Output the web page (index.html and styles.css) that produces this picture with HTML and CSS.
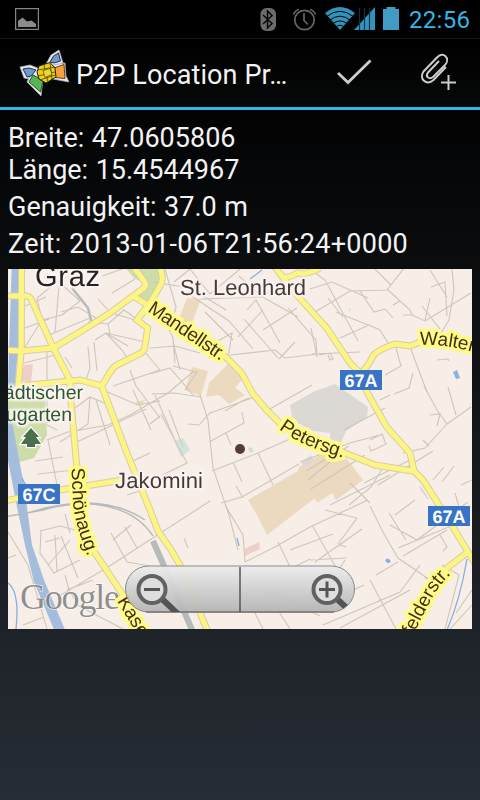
FILE: index.html
```html
<!DOCTYPE html>
<html lang="de">
<head>
<meta charset="utf-8">
<title>P2P Location Provider</title>
<link rel="stylesheet" href="styles.css">
</head>
<body>
<header class="status">
  <svg class="status-photo" width="24" height="22" viewBox="15 8 24 22"><rect x="15.6" y="8.6" width="22.8" height="20.8" fill="#050505" stroke="#858585" stroke-width="1.2"/><path d="M18 27V21l4.500-3.500 4.500 4 4.500-1L36 24v3z" fill="#8c8c8c"/></svg>
  <svg class="status-icons" width="144" height="28" viewBox="258 5 144 28">
    <rect x="260.500" y="8" width="15.500" height="23" rx="6" fill="#6c6c6c"/>
    <path d="M263 15l9 8.500-4.500 4.500V11l4.500 4.500-9 8.500" fill="none" stroke="#090909" stroke-width="1.500"/>
    <g fill="none" stroke="#666" stroke-width="1.700"><circle cx="304.500" cy="20" r="9.700"/><path d="M304 13v7.500l4 4M293.500 14.500q1.500-4 5.500-5M315.500 14.500q-1.500-4-5.500-5"/></g>
    <path d="M325 13Q340 1 355 13L340 30z" fill="#3194bd"/>
    <path d="M326 17Q340 5.500 354 17M329 20.800Q340 11.500 351 20.800M332 24.300Q340 17.500 348 24.300M335 27.500Q340 23 345 27.500" fill="none" stroke="#000" stroke-width="1"/>
    <path d="M354 30L375 7V30z" fill="#3194bd"/>
    <path d="M359.500 8v22M364.500 8v22M369.500 8v22" stroke="#0a3346" stroke-width="1.200"/>
    <path d="M383 9h3.500V7h9v2h3.500v21h-16z" fill="#419cc4"/>
  </svg>
  <time class="clock">22:56</time>
</header>
<nav class="bar">
  <svg class="logo" width="52" height="50" viewBox="18 49 52 50">
    <g stroke-linejoin="round">
      <g fill="#e9ebf2" stroke="#a6aab8" stroke-width=".8">
        <path d="M46 65l5-9 8-5 4 13-9 5-7 2z"/><path d="M20 68l10-2 10 4 1 8-8 3-9-2z"/><path d="M53 66l12-2 1 13 3 6-16-3z"/><path d="M31 75l12 5-2 17-14-14z"/>
      </g>
      <path d="M50 63l3.500-6 5-3 2 8-6.500 2z" fill="#6e9ace" stroke="#252e40"/>
      <path d="M23 70l6-1 7 2-5 6-4 1z" fill="#6e9ace" stroke="#252e40"/>
      <path d="M54 69l10-3.500 1 14-10-1z" fill="#f6a13b" stroke="#654019"/>
      <path d="M33 76l10 6-2.500 11L29 83z" fill="#57b653" stroke="#235925"/>
      <path d="M39 67l11-3.500 5 5.500 1 9-10 6-7-4-2-7z" fill="#ebcf19" stroke="#201d05"/>
      <path d="M38 71l17-3M38 77l17-4M44 66l4 17M50 64l2 16M40 81l15-5" fill="none" stroke="#4d4508" stroke-width=".8"/>
      <path d="M43 71.500l7-2 2 6-7 3z" fill="#f0d52b" stroke="#4d4508" stroke-width=".7"/>
    </g>
  </svg>
  <h1 class="title">P2P Location Pr…</h1>
  <svg class="act" width="145" height="50" viewBox="335 50 145 50" fill="none" stroke="#ccc">
    <path d="M338 75l10 9.500L370.500 62.500" stroke-width="2.800"/>
    <path d="M446 69L433.500 82c-7 6-15-1-10-8.500L437 59.500c6-7 14 1 8 7.500L433 79c-4 3-8-.5-5-4.500L439 63" stroke-width="2"/>
    <path d="M441 84.500h15M448.500 77v15" stroke-width="2"/>
  </svg>
</nav>
<main class="content">
  <p class="line first">Breite: 47.0605806</p>
  <p class="line">Länge: 15.4544967</p>
  <p class="line">Genauigkeit: 37.0 m</p>
  <p class="line time">Zeit: 2013-01-06T21:56:24+0000</p>
  <svg class="map" width="464" height="360" viewBox="8 269 464 360">
    <defs>
      <linearGradient id="zoom" x2="0" y2="1"><stop stop-color="#ededed"/><stop offset=".5" stop-color="#d0d0d0"/><stop offset="1" stop-color="#b4b4b4"/></linearGradient>
      <filter id="white-halo" filterUnits="userSpaceOnUse" x="8" y="269" width="464" height="360" color-interpolation-filters="sRGB"><feMorphology in="SourceAlpha" operator="dilate" radius="2" result="wide"/><feGaussianBlur in="wide" stdDeviation=".8" result="soft"/><feFlood flood-color="#fcf3f3"/><feComposite in2="soft" operator="in" result="halo"/><feMerge><feMergeNode in="halo"/><feMergeNode in="SourceGraphic"/></feMerge></filter>
      <filter id="yellow-halo" filterUnits="userSpaceOnUse" x="8" y="269" width="464" height="360" color-interpolation-filters="sRGB"><feMorphology in="SourceAlpha" operator="dilate" radius="3" result="wide"/><feGaussianBlur in="wide" stdDeviation=".6" result="soft"/><feFlood flood-color="#fffb86"/><feComposite in2="soft" operator="in" result="halo"/><feMerge><feMergeNode in="halo"/><feMergeNode in="halo"/><feMergeNode in="SourceGraphic"/></feMerge></filter>
      <clipPath id="pill"><rect x="126" y="566" width="228" height="46" rx="23"/></clipPath>
      <g id="roads">
        <path d="M21.500 262L21.300 350 18 387"/>
        <path d="M4 296L26 296Q30 296 32 301L53.300 348 70 380 71 402 76.700 465 82 515 95 553 121.700 593 142 632"/>
        <path d="M4 350L21 351 53 348 80 332 110 313 133 296 144 288Q147 285 144 281L133 266"/>
        <path d="M18 386L50 383 80 380 101.700 386 109 374Q113 367 117 365L141 353Q145 350 145 346L147.700 328 137 320 150 303 160 286Q163 281 162 276L160 266"/>
        <path d="M133 296L146 304 190 334 226.700 358 241.700 373 253 394 266.700 410 281.700 425 345 453 375 465 413 471"/>
        <path d="M274 266L295 293 326.700 328 350 363 360 373 367 392 386.700 427 410 453 414 471 423 480 451.700 525 468 552 476 565"/>
        <path d="M284 277Q290 278 297 273 307 275 320 268"/>
        <path d="M360 373Q367 369 373 356 377 350 395 344L410 346 423 341"/>
        <path d="M101.700 386L125 448 150 510 158 531 170 548 180 565 208 632"/>
        <path d="M4 501L60 490 123 480"/>
        <path d="M468 552L447 568 425 595 404 632"/>
      </g>
      <path id="mandell" d="M147 311L222 362"/><path id="peters" d="M279 429Q302 447 348 459"/><path id="walter" d="M420 345Q447 343 490 357"/>
      <path id="schoen" d="M71.500 468L73 503Q75 525 89 560"/><path id="kaserne" d="M117 601L142 642"/><path id="felder" d="M404 654L419 623 430 602Q438 586 451 574"/>
    </defs>
    <rect x="8" y="269" width="464" height="360" fill="#f6eee7"/>
    <path d="M124 266H160L161 280 148 303 136 294 146 284 134 278zM8 397H45L47 435 34 458 16 463 8 420z" fill="#cddca9"/>
    <g fill="#ecdac0"><path d="M187 298l14 1-12 32-12-7zM192 367l16 4-7 25-16-6zM209 383l19-19 15 14-8 10 10 7-16 9-10-9-13 2zM248 500l50-29 1-4 36-21 16 18 12 16-27 20-7-13-62 48-10-20zM136 402l9-2-2 4-7 1zM310 489l22-15 6 15-21 14z"/></g>
    <path d="M290 405l25-14 20-7 33 23-1 10-21 14-5 12-11-4v-6l-16-2-21-10zM301 463l10-8 3 5-8 8zM248 448l3-1 3 4-4 2z" fill="#dcd9d5"/>
    <path d="M24 365l9-1-2 18-10-1zM244 549l15-7 1 7-15 7z" fill="#efcfca"/>
    <path d="M174 441l9-3 7 12-9 7zM348 309l3-1-1 4z" fill="#d4e4dd"/>
    <path d="M11.700 268H19L18 350 15 385 8 397V385L9 350zM4 390L12 422 24 485 32 545 44 580 66 632H55L34 582 25 545 17 507 4 440z" fill="#a4bddd"/>
    <g fill="none" stroke="#86aee0" stroke-width="1.300"><path d="M8 583Q20 592 16 629M250 279l12-9M467 559Q460 600 447 630M237 538l2 8M22 478l4 8"/></g>
    <path d="M453 372l4-2 3 8-4 1zM385 560q3-3 5 0t-3 3z" fill="#8ab1e2"/>
    <g fill="none" stroke="#b6babb"><path d="M72 288L88 308 92 324" stroke-width="2.500"/><path d="M4 517L43 510Q77 500 106 506 138 513 153 536M28 513Q100 490 145 520" stroke-width="1.400"/><path d="M153 541L168 575 193 632" stroke-width="6"/></g>
    <g class="lanes">
      <path d="M25 328L49 319M25 347L42 320 37 298M25 306L46 297M37 298L58 281 80 301 62 315 42 320M59 286L55 332M24 363L48 357 58 354M47 349L47 382M65 357L72 368M61 312L78 307 99 320M49 335L90 318M88 347L90 368 86 380M95 340L106 333 128 346M94 342L97 371M88 322L108 324 124 310 137 319M108 324L110 334M102 276L125 268M112 293L135 279M98 299L108 310M115 314L135 320M106 333L145 342M106 333L122 350 130 362M130 370L136 386 160 418M113 386L160 370M144 351L160 370"/>
      <path d="M71 411L90 397 109 405M90 397L88 424 60 442M80 430L108 425 130 415 168 393 194 371M47 440L68 432 81 430M48 440L57 485M35 461L63 457M38 474L74 470M47 398L47 425 57 430M96 400L110 445M103 390L138 405 160 401M77 442L146 409M133 390L151 430M155 395L174 438M133 461L150 453M127 495L146 489"/>
      <path d="M154 300L173 338 175 363M165 269L176 307 171 326M153 282L190 288 226 310M174 282L190 269 210 294 240 269M288 308L316 340 317 356M201 299L263 297 288 275M190 295L229 321 253 349M205 312L233 340M209 346L232 333 228 358M230 355L275 350 285 358 317 354M238 337L263 310M244 319L278 358M239 276L261 296 298 317M247 310L256 300 280 343M279 359L295 342M263 330L297 308M173 342L180 370M150 348L175 346 200 353M173 366L197 372 185 390M150 374L170 368 194 396M152 394L174 393 201 397"/>
      <path d="M310 269L325 280 358 341M310 289L332 282 368 298M375 269L391 285M310 315L350 291 387 290 405 267M388 290L410 310 412 315M393 305L400 301M328 298L343 317M336 312L368 325M340 338L369 325 380 330 388 343M360 291L374 312 385 309 393 318M403 315L412 315 425 321 471 293M430 298L425 320M422 306L440 329M452 269L454 290 449 320 440 335M431 287L445 282 447 316M430 270L440 286 447 297M410 347L427 392M396 348L401 366 385 375M413 373L409 388 394 394M437 360L448 359 449 361M312 354L360 352M311 328L317 357M319 355L330 353 333 359 330 360 328 355"/>
      <path d="M424 386L437 410 447 424M447 424L471 407M430 415L440 414 437 426M448 387L456 415M344 430L385 408M268 410L312 385M300 462L350 443 380 435M370 440L382 434 386 444 371 451 369 446M380 400L390 395M403 453L425 448 447 424M423 440L429 446M433 480L444 467M461 485L472 480M442 482L454 466M420 487L428 499M455 493L464 524"/>
      <path d="M150 424L160 416M161 414L187 463 150 481M169 410L183 447M199 425L188 424M199 425L210 413 252 398M242 412L244 423 211 441 209 442M226 433L231 445M200 395L208 420 213 468 229 515 238 550M212 471L258 453 290 439M233 462L242 482M258 453L273 485M236 486L243 498M221 503L242 497 299 464M225 411L242 401 249 398"/>
      <path d="M8 532L28 565 47 629M16 555L8 558M40 531L60 526 75 530M41 530L40 553 54 573 80 560M45 542L60 538M61 536L78 578M65 514L70 533M70 540L48 565M55 535L57 571M61 595L108 567 210 501M111 533L127 562 150 566M113 540L131 525M125 527L137 548M188 548L184 538M65 575L69 590 79 606 100 617 123 629M67 590L93 580M23 625L44 617M225 505L243 535 245 562M245 562L275 547 310 527 368 500M278 542L291 569M312 525L342 578M290 550L333 534M290 569L310 559M340 545L346 547M315 562L362 529M325 510L357 518 338 544M370 506L384 534 398 558 430 580M390 525L417 540 468 502M389 513L406 540M398 548L451 526M403 556L447 530M376 575L398 562M443 551L447 547 440 535M310 610L364 585M323 625L400 592 420 565M340 628L410 590M246 595L263 629M264 588L290 629M270 592L320 616M370 580L396 629M338 571L345 560M333 569L339 585M310 560L346 558M424 576L440 592 425 604M442 565L459 575 445 629M450 629L472 605M456 613L472 590"/>
      <path d="M306 471L349 446M308 480L330 462M311 489L365 455M330 505L390 475M349 505L371 487 384 466M364 483L410 460M378 485L433 451M395 515L415 500M350 483L370 503"/>
    </g>
    <use href="#roads" fill="none" stroke="#ddcba4" stroke-width="7"/>
    <use href="#roads" fill="none" stroke="#fbf683" stroke-width="5"/>
    <path d="M31 428l8 9h-3l5 7h-6v3h-8v-3h-6l5-7h-3z" fill="#496f4b" stroke="#fff" stroke-width="2.500" paint-order="stroke"/>
    <text class="google" x="20" y="609" textLength="100">Google</text>
    <g class="label" filter="url(#white-halo)"><text x="35" y="286" font-size="29" textLength="65" fill="#242321">Graz</text><text x="180" y="295" textLength="126">St. Leonhard</text><text x="115" y="488" textLength="88">Jakomini</text><g fill="#285b2b" font-size="19.500" text-anchor="end"><text x="83" y="399">Städtischer</text><text x="72" y="421">Augarten</text></g></g>
    <g class="street" filter="url(#yellow-halo)"><text textLength="89"><textPath href="#mandell">Mandellstr.</textPath></text><text><textPath href="#peters">Petersg.</textPath></text><text><textPath href="#walter">Walter</textPath></text><text><textPath href="#schoen">Schönaug.</textPath></text><text><textPath href="#kaserne">Kase</textPath></text><text text-anchor="end"><textPath href="#felder" startOffset="100%">ffelderstr.</textPath></text></g>
    <g class="badge"><path d="M340 370h42v20h-42zM18 484h42v20H18zM428 506h42v20h-42z" fill="#3973c6"/><text x="361" y="386.500">67A</text><text x="39" y="500.500">67C</text><text x="449" y="522.500">67A</text></g>
    <circle cx="240" cy="449" r="5" fill="#573b38"/>
    <rect x="125.500" y="566" width="229" height="46" rx="23" fill="url(#zoom)" fill-opacity=".94" stroke="#8b8b8b"/>
    <path d="M146 612h188" stroke="#777" stroke-width="1.500"/><path d="M240 567v45" stroke="#555" stroke-width="1.500"/>
    <g clip-path="url(#pill)"><path d="M161 598l18 17M336 598l18 17" stroke="#535353" stroke-width="6"/></g>
    <g fill="#dedede" stroke="#626262" stroke-width="4"><circle cx="152" cy="589.500" r="13.500"/><circle cx="327" cy="589.500" r="13.500"/></g>
    <path d="M144 589.500h16M319 589.500h16M327 581.500v16" stroke="#555" stroke-width="3"/>
  </svg>
</main>
</body>
</html>
```
FILE: styles.css
```css
* { box-sizing: border-box; }
body { margin: 0; height: 800px; overflow: hidden; color: #f3f3f3; background: linear-gradient(#000 0, #000 60px, #272d35 800px); font-family: Roboto, sans-serif; }
.status { height: 38px; display: flex; align-items: flex-start; background: #000; padding: 5px 9px 0 15px; }
.status-photo { margin-top: 3px; }
.status-icons { margin-left: auto; }
.clock { width: 62px; margin-left: 7px; color: #33b5e5; font-size: 24px; line-height: 30px; letter-spacing: .3px; white-space: nowrap; }
.bar { height: 72px; border-top: 1px solid #151515; border-bottom: 3px solid #33b5e5; display: flex; align-items: center; padding-left: 18px; background: linear-gradient(#000, #070809); }
.logo { flex: none; }
.title { flex: none; width: 259px; margin: 0 0 0 6px; padding-top: 3px; font-size: 27px; line-height: 34px; font-weight: 400; letter-spacing: .1px; white-space: nowrap; }
.act { flex: none; }
.content { padding: 12px 8px 0; }
.line { margin: 0 0 5px; height: 32px; line-height: 32px; font-size: 27px; word-spacing: .8px; white-space: nowrap; }
.first { margin-bottom: 0; }
.time { margin-bottom: 9px; letter-spacing: .26px; }
.map { display: block; }
.lanes { fill: none; stroke: #cfc6bb; stroke-width: 1.1; }
.label, .street, .badge { font-family: "Liberation Sans", sans-serif; text-rendering: geometricPrecision; }
.label { font-size: 22px; fill: #443b33; }
.street { font-size: 19px; fill: #432d15; }
.badge { font-size: 18px; font-weight: 700; fill: #fff; text-anchor: middle; }
.google { font-family: "Liberation Serif", serif; font-size: 36px; fill: #747474; fill-opacity: .8; stroke: #fff; stroke-width: 1; paint-order: stroke; }
```
